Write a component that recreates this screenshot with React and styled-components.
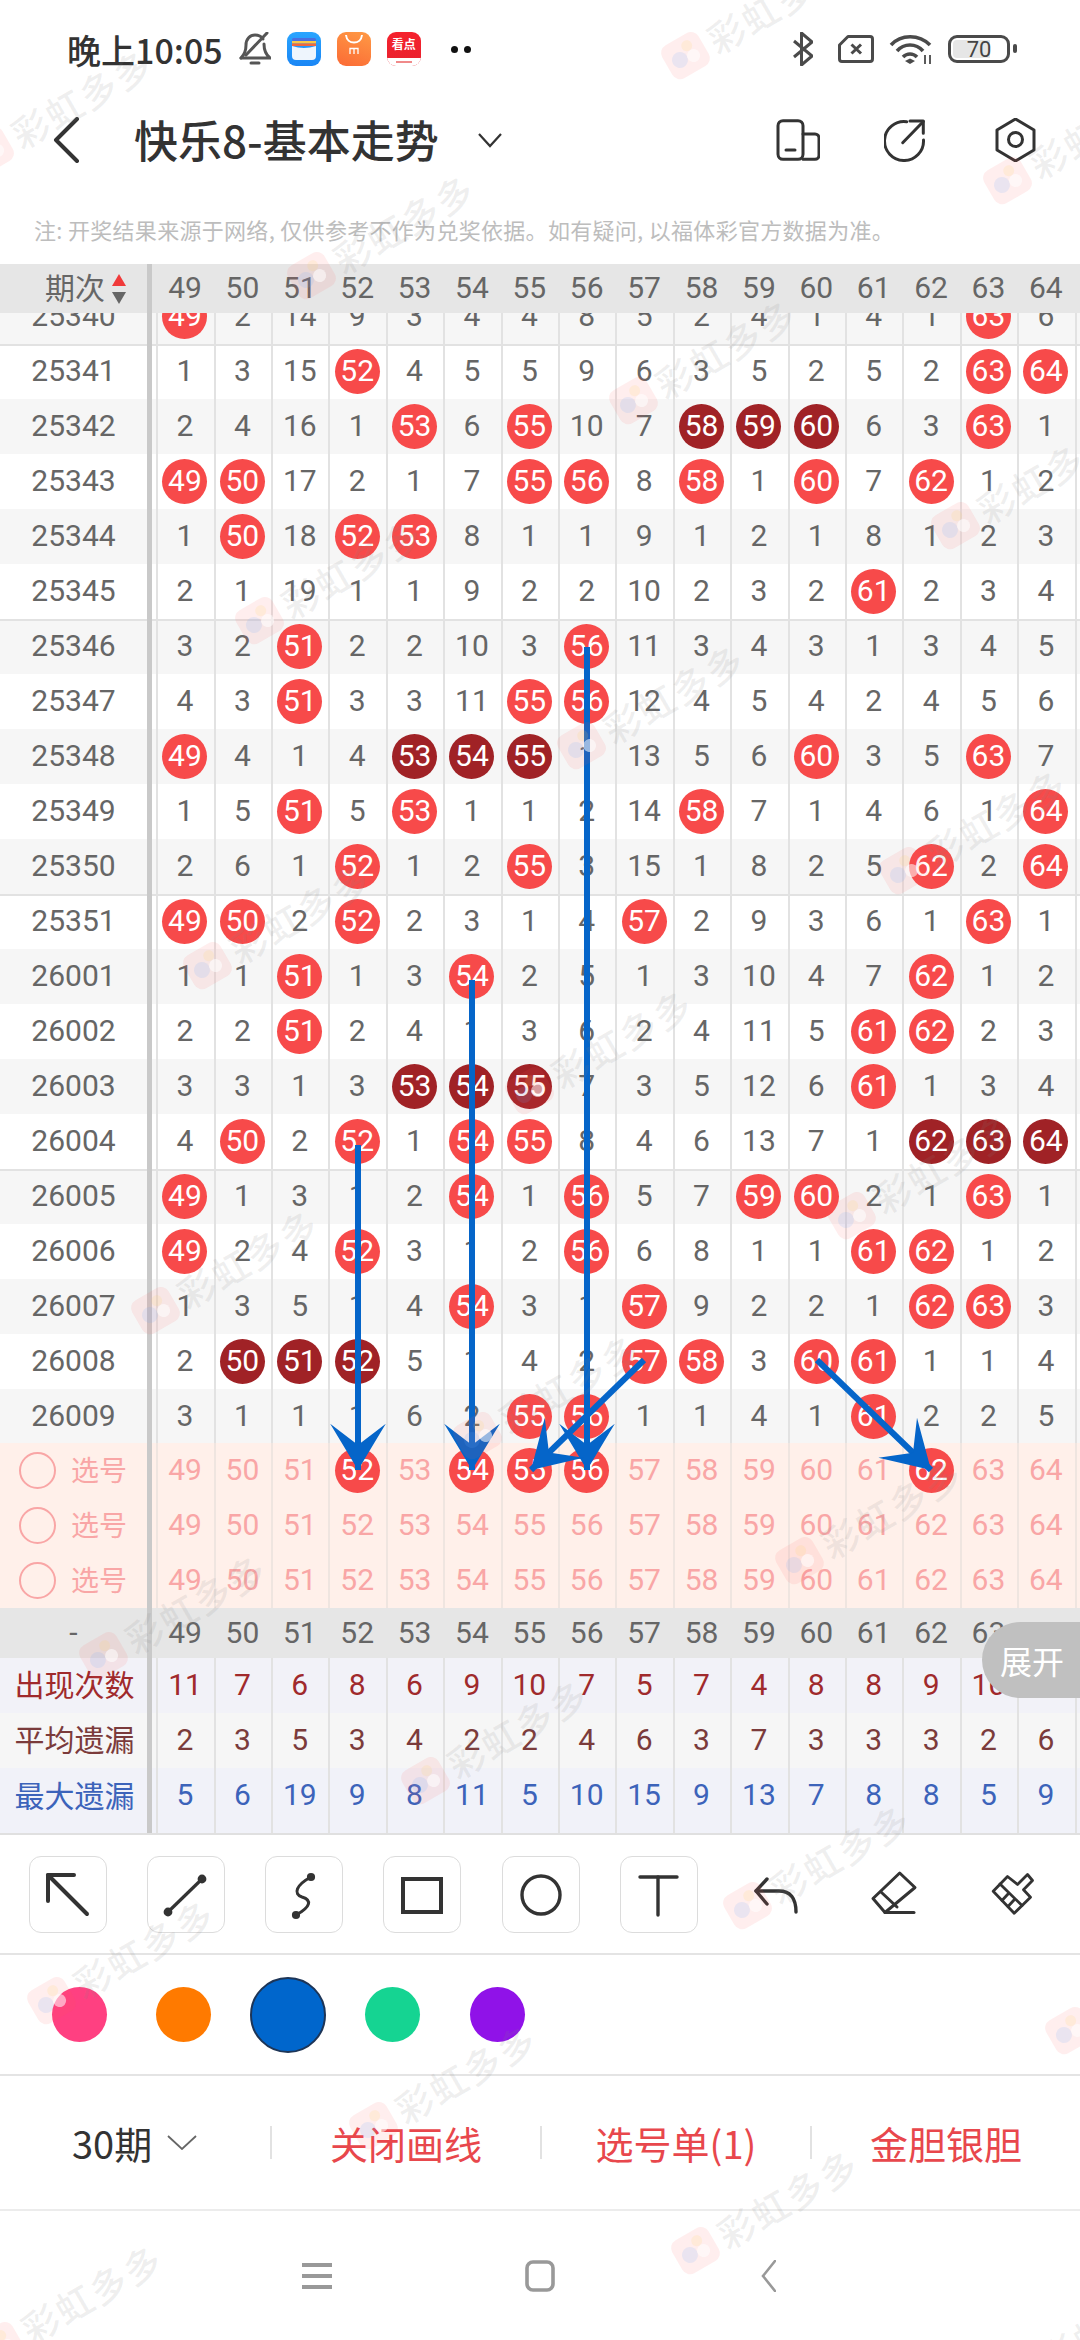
import styled, { createGlobalStyle } from "styled-components";

const GlobalStyle = createGlobalStyle`
  html, body { margin: 0; padding: 0; background: #fff; }
  * { box-sizing: border-box; }
`;

const CJK = `"Noto Sans CJK SC", "Noto Sans", sans-serif`;
const NUM = `Roboto, "Noto Sans CJK SC", sans-serif`;

const COLS = [49, 50, 51, 52, 53, 54, 55, 56, 57, 58, 59, 60, 61, 62, 63, 64];

const ROWS = [
  ["25340", 49, 2, 14, 9, 3, 4, 4, 8, 5, 2, 4, 1, 4, 1, 63, 6],
  ["25341", 1, 3, 15, 52, 4, 5, 5, 9, 6, 3, 5, 2, 5, 2, 63, 64],
  ["25342", 2, 4, 16, 1, 53, 6, 55, 10, 7, 58, 59, 60, 6, 3, 63, 1],
  ["25343", 49, 50, 17, 2, 1, 7, 55, 56, 8, 58, 1, 60, 7, 62, 1, 2],
  ["25344", 1, 50, 18, 52, 53, 8, 1, 1, 9, 1, 2, 1, 8, 1, 2, 3],
  ["25345", 2, 1, 19, 1, 1, 9, 2, 2, 10, 2, 3, 2, 61, 2, 3, 4],
  ["25346", 3, 2, 51, 2, 2, 10, 3, 56, 11, 3, 4, 3, 1, 3, 4, 5],
  ["25347", 4, 3, 51, 3, 3, 11, 55, 56, 12, 4, 5, 4, 2, 4, 5, 6],
  ["25348", 49, 4, 1, 4, 53, 54, 55, 1, 13, 5, 6, 60, 3, 5, 63, 7],
  ["25349", 1, 5, 51, 5, 53, 1, 1, 2, 14, 58, 7, 1, 4, 6, 1, 64],
  ["25350", 2, 6, 1, 52, 1, 2, 55, 3, 15, 1, 8, 2, 5, 62, 2, 64],
  ["25351", 49, 50, 2, 52, 2, 3, 1, 4, 57, 2, 9, 3, 6, 1, 63, 1],
  ["26001", 1, 1, 51, 1, 3, 54, 2, 5, 1, 3, 10, 4, 7, 62, 1, 2],
  ["26002", 2, 2, 51, 2, 4, 1, 3, 6, 2, 4, 11, 5, 61, 62, 2, 3],
  ["26003", 3, 3, 1, 3, 53, 54, 55, 7, 3, 5, 12, 6, 61, 1, 3, 4],
  ["26004", 4, 50, 2, 52, 1, 54, 55, 8, 4, 6, 13, 7, 1, 62, 63, 64],
  ["26005", 49, 1, 3, 1, 2, 54, 1, 56, 5, 7, 59, 60, 2, 1, 63, 1],
  ["26006", 49, 2, 4, 52, 3, 1, 2, 56, 6, 8, 1, 1, 61, 62, 1, 2],
  ["26007", 1, 3, 5, 1, 4, 54, 3, 1, 57, 9, 2, 2, 1, 62, 63, 3],
  ["26008", 2, 50, 51, 52, 5, 1, 4, 2, 57, 58, 3, 60, 61, 1, 1, 4],
  ["26009", 3, 1, 1, 1, 6, 2, 55, 56, 1, 1, 4, 1, 61, 2, 2, 5],
];

const PICKED = [[52, 54, 55, 56, 62], [], []];

const STATS = [
  { label: "出现次数", color: "#a02a2c", bg: "#f2f2f8", values: [11, 7, 6, 8, 6, 9, 10, 7, 5, 7, 4, 8, 8, 9, 10, 7] },
  { label: "平均遗漏", color: "#7b3b3b", bg: "#f6f6f6", values: [2, 3, 5, 3, 4, 2, 2, 4, 6, 3, 7, 3, 3, 3, 2, 6] },
  { label: "最大遗漏", color: "#3c63ba", bg: "#f1f2f9", tall: true, values: [5, 6, 19, 9, 8, 11, 5, 10, 15, 9, 13, 7, 8, 8, 5, 9] },
];

const ARROWS = [
  [358, 1145, 358, 1470],
  [472, 980, 472, 1470],
  [587, 647, 587, 1470],
  [644, 1360, 531, 1470],
  [817, 1360, 931, 1470],
];

const SWATCHES = [
  { color: "#ff4081" },
  { color: "#ff7a00" },
  { color: "#0066cc", active: true },
  { color: "#15d492" },
  { color: "#9012e8" },
];

const Page = styled.div`
  position: relative;
  width: 1080px;
  height: 2340px;
  overflow: hidden;
  background: #fff;
  font-family: ${CJK};
`;

/* status bar */
const StatusBar = styled.div`
  display: flex;
  align-items: center;
  height: 98px;
  padding: 0 64px 0 67px;
  color: #333;
`;

const Clock = styled.span`
  font-size: 34px;
  font-weight: 500;
  margin-right: 16px;
  white-space: nowrap;
`;

const StatusApps = styled.div`
  display: flex;
  align-items: center;
  gap: 16px;
`;

const AppTile = styled.div`
  position: relative;
  width: 34px;
  height: 34px;
  border-radius: 9px;
  overflow: hidden;
  background: ${(p) => p.$bg};
`;

const RedTileText = styled.span`
  display: block;
  margin-top: 2px;
  color: #fff;
  font-size: 12px;
  line-height: 20px;
  font-weight: 700;
  text-align: center;
  white-space: nowrap;
`;

const RedTileFoot = styled.div`
  position: absolute;
  left: 0;
  right: 0;
  bottom: 0;
  height: 8px;
  background: #fff;

  &::after {
    content: "";
    display: block;
    width: 16px;
    height: 2px;
    margin: 3px auto 0;
    background: #f08a8a;
  }
`;

const Dots = styled.div`
  display: flex;
  gap: 6px;
  margin-left: 14px;
`;

const Dot = styled.i`
  width: 7px;
  height: 7px;
  border-radius: 50%;
  background: #111;
`;

const StatusRight = styled.div`
  display: flex;
  align-items: center;
  gap: 15px;
  margin-left: auto;
`;

const BluetoothIcon = styled.svg`
  margin-right: 10px;
`;

const Battery = styled.div`
  position: relative;
  display: flex;
  align-items: center;
  justify-content: center;
  width: 62px;
  height: 28px;
  margin-right: 6px;
  border: 3.5px solid #4a4a4a;
  border-radius: 9px;
  font-family: ${NUM};
  font-size: 22px;
  color: #444;
  background: linear-gradient(90deg, #e6e6e6 72%, #fff 72%) content-box;
  padding: 2px;

  &::after {
    content: "";
    position: absolute;
    right: -10px;
    top: 6px;
    width: 4px;
    height: 9px;
    border-radius: 2px;
    background: #4a4a4a;
  }
`;

/* title bar */
const NavBar = styled.div`
  display: flex;
  align-items: center;
  height: 84px;
  padding: 0 44px 0 52px;
  color: #333;
`;

const Title = styled.h1`
  margin: 0 0 3px 52px;
  font-size: 44px;
  line-height: 60px;
  font-weight: 500;
  color: #333;
  white-space: nowrap;
`;

const TitleCaret = styled.span`
  display: flex;
  margin-left: 38px;
`;

const NavIcons = styled.div`
  display: grid;
  grid-template-columns: repeat(3, 44px);
  column-gap: 64px;
  margin-left: auto;
`;

const Note = styled.div`
  height: 82px;
  padding: 29px 0 0 34px;
  font-size: 22px;
  line-height: 36px;
  letter-spacing: 0.3px;
  color: #bdbdbd;
  white-space: nowrap;
`;

/* table */
const Band = styled.div`
  display: flex;
  height: ${(p) => p.$h}px;
  background: #e6e6e6;
  color: #666;
  font-family: ${NUM};
  font-size: 30px;
`;

const Row = styled.div`
  display: flex;
  height: ${(p) => p.$h || 55}px;
  background: ${(p) => p.$bg};
  color: ${(p) => p.$color || "#666"};
  font-family: ${NUM};
  font-size: 30px;
  box-shadow: ${(p) => (p.$group ? "inset 0 2px 0 #e2e2e2" : "none")};
`;

const Label = styled.div`
  display: flex;
  flex: 0 0 152px;
  align-items: center;
  justify-content: center;
  padding-bottom: ${(p) => p.$pb || 2}px;
  padding-left: ${(p) => (p.$cjk ? 2 : 0)}px;
  border-right: 5px solid #c9c9c9;
  white-space: nowrap;
  font-family: ${(p) => (p.$cjk ? CJK : NUM)};
`;

const HeadLabel = styled(Label)`
  gap: 7px;
  padding-left: 24px;
  padding-bottom: 5px;
  font-family: ${CJK};
`;

const SortMark = styled.span`
  display: flex;
  flex-direction: column;
  gap: 6px;
  margin-top: 5px;
`;

const Tri = styled.i`
  width: 0;
  height: 0;
  border-left: 7px solid transparent;
  border-right: 7px solid transparent;
  border-bottom: ${(p) => (p.$up ? "12px solid #f03a3a" : "0")};
  border-top: ${(p) => (p.$up ? "0" : "12px solid #666")};
`;

const Cells = styled.div`
  position: relative;
  display: flex;
  flex: 1;
  padding-left: 4.3px;

  &::after {
    content: "";
    position: absolute;
    left: 922.7px;
    top: 0;
    bottom: 0;
    width: 2px;
    background: ${(p) => p.$line || "transparent"};
  }
`;

const Cell = styled.div`
  display: flex;
  flex: 0 0 57.4px;
  align-items: center;
  justify-content: center;
  padding-bottom: ${(p) => p.$pb || 2}px;
  box-shadow: ${(p) => (p.$line ? `inset 2px 0 0 ${p.$line}` : "none")};
`;

const Ball = styled.span`
  display: flex;
  align-items: center;
  justify-content: center;
  width: 45px;
  height: 45px;
  margin-top: 2px;
  padding-bottom: 2px;
  border-radius: 50%;
  color: #fff;
  background: ${(p) => (p.$dark ? "#a02226" : "#f74a4a")};
`;

const Body = styled.div`
  height: 1130px;
  overflow: hidden;
`;

const BodyScroll = styled.div`
  margin-top: -24px;
`;

const PinkRow = styled(Row)`
  background: #fff0ea;
  color: #f9a6a6;
`;

const PickLabel = styled.div`
  display: flex;
  flex: 0 0 152px;
  align-items: center;
  gap: 15px;
  padding-left: 19px;
  border-right: 5px solid #c9c9c9;
  font-family: ${CJK};
  font-size: 28px;
`;

const PickText = styled.span`
  margin-bottom: 3px;
`;

const PickRing = styled.i`
  width: 37px;
  height: 37px;
  border: 2px solid #f9a6a6;
  border-radius: 50%;
`;

const ExpandTab = styled.div`
  position: absolute;
  left: 982px;
  top: 1622px;
  display: flex;
  align-items: center;
  width: 98px;
  height: 76px;
  padding-left: 18px;
  border-radius: 38px 0 0 38px;
  background: #c0c0c0;
  color: #fff;
  font-size: 32px;
`;

const TableEnd = styled.div`
  height: 2px;
  background: #e0e0e0;
`;

/* drawing tools */
const Tools = styled.div`
  display: flex;
  align-items: center;
  justify-content: space-between;
  height: 120px;
  padding: 0 28px 0 29px;
  border-bottom: 2px solid #e4e4e4;
`;

const Tool = styled.div`
  display: flex;
  flex: 0 0 76px;
  height: 77px;
  border-radius: 12px;
  border: 1.5px solid ${(p) => (p.$plain ? "transparent" : "#dcdcdc")};
`;

const Colors = styled.div`
  display: flex;
  align-items: center;
  height: 121px;
  padding-left: 27px;
  border-bottom: 2px solid #e4e4e4;
`;

const Slot = styled.div`
  display: flex;
  flex: 0 0 104.5px;
  justify-content: center;
`;

const Swatch = styled.i`
  width: ${(p) => (p.$active ? 76 : 55)}px;
  height: ${(p) => (p.$active ? 76 : 55)}px;
  border-radius: 50%;
  background: ${(p) => p.$color};
  border: ${(p) => (p.$active ? "2px solid #1d3557" : "0")};
`;

const Actions = styled.div`
  display: flex;
  align-items: center;
  height: 135px;
  border-bottom: 2px solid #ececec;
`;

const PeriodPick = styled.div`
  display: flex;
  flex: 0 0 270px;
  align-items: center;
  gap: 15px;
  padding-left: 72px;
  font-size: 38px;
  color: #333;
`;

const ActionBtn = styled.div`
  flex: 1;
  text-align: center;
  font-size: 38px;
  color: #e8474c;
  white-space: nowrap;
`;

const ActionRule = styled.i`
  flex: 0 0 2px;
  height: 33px;
  background: #e2e2e2;
`;

const SysNav = styled.div`
  display: grid;
  grid-template-columns: repeat(3, 223px);
  justify-content: center;
  justify-items: center;
  align-items: center;
  height: 129px;
`;

/* overlays */
const Overlay = styled.svg`
  position: absolute;
  left: 0;
  top: 0;
  pointer-events: none;
`;

const Mark = styled.div`
  position: absolute;
  display: flex;
  align-items: center;
  gap: 4px;
  transform: rotate(-30deg);
  transform-origin: 24px 24px;
  pointer-events: none;
`;

const MarkText = styled.span`
  font-size: 37px;
  font-weight: 500;
  letter-spacing: 2px;
  color: rgba(130, 130, 130, 0.13);
  white-space: nowrap;
`;

function ballDarkFlags(row) {
  // 连续三个及以上中奖号 -> 深色
  const hit = row.map((n, i) => n === COLS[i]);
  return hit.map((h, i) => {
    if (!h) return false;
    return (hit[i - 1] && hit[i - 2]) || (hit[i - 1] && hit[i + 1]) || (hit[i + 1] && hit[i + 2]);
  });
}

function arrowHead(x1, y1, x2, y2) {
  const len = Math.hypot(x2 - x1, y2 - y1);
  const ux = (x1 - x2) / len;
  const uy = (y1 - y2) / len;
  const wing = (deg) => {
    const r = (deg * Math.PI) / 180;
    return [x2 + 54 * (ux * Math.cos(r) - uy * Math.sin(r)), y2 + 54 * (ux * Math.sin(r) + uy * Math.cos(r))];
  };
  const a = wing(31);
  const b = wing(-31);
  return `${x2},${y2} ${a[0]},${a[1]} ${x2 + 25 * ux},${y2 + 25 * uy} ${b[0]},${b[1]}`;
}

function Watermarks() {
  const items = [];
  for (let j = -1; j <= 6; j++) {
    for (let i = -2; i <= 3; i++) {
      const x = 310 + i * 322 - j * 52;
      const y = 273 + i * 125 + j * 345;
      if (x > -60 && x < 1120 && y > -40 && y < 2380) items.push([x, y]);
    }
  }
  return items.map(([x, y]) => (
    <Mark key={`${x}-${y}`} style={{ left: x - 24, top: y - 24 }}>
      <svg width="48" height="48" viewBox="0 0 48 48">
        <rect x="3" y="5" width="42" height="38" rx="9" fill="#ff5a5a" opacity="0.1" />
        <circle cx="17" cy="25" r="8" fill="#6aa8ff" opacity="0.14" />
        <circle cx="30" cy="16" r="5.5" fill="#ffd75a" opacity="0.14" />
        <circle cx="31" cy="28" r="6.5" fill="#ffffff" opacity="0.55" />
      </svg>
      <MarkText>彩虹多多</MarkText>
    </Mark>
  ));
}

function Ic({ w = 76, h = 77, children, sw = 4 }) {
  return (
    <svg width={w} height={h} viewBox={`0 0 ${w} ${h}`} fill="none" stroke="#333" strokeWidth={sw} strokeLinecap="round" strokeLinejoin="round">
      {children}
    </svg>
  );
}

function StatusIcons() {
  return (
    <StatusRight>
      <BluetoothIcon width="20" height="34" viewBox="0 0 20 34" fill="none" stroke="#4a4a4a" strokeWidth="3" strokeLinejoin="round">
        <path d="M1 9 L19 24 L8.5 33 V1 L19 10 L1 25" />
      </BluetoothIcon>
      <svg width="36" height="28" viewBox="0 0 36 28" fill="none" stroke="#4a4a4a" strokeWidth="3" strokeLinejoin="round">
        <path d="M10 1.5 H32 a2.5 2.5 0 0 1 2.5 2.5 V24 a2.5 2.5 0 0 1 -2.5 2.5 H4 a2.5 2.5 0 0 1 -2.5 -2.5 V10 Z" />
        <path d="M13.5 9.5 L23 18.5 M23 9.5 L13.5 18.5" />
      </svg>
      <svg width="44" height="32" viewBox="0 0 44 32" fill="none" stroke="#4a4a4a" strokeWidth="3.6">
        <path d="M2 12 C12 1 30 1 41 12" />
        <path d="M8 18 C15 10 27 10 34 18" />
        <path d="M14 24 C18 20 24 20 28 24" />
        <path d="M16 28 L21 25.5 L26 28 L21 31 Z" fill="#4a4a4a" stroke="none" />
        <path d="M36 22 V31 M41 22 V31" strokeWidth="1.8" />
      </svg>
      <Battery>70</Battery>
    </StatusRight>
  );
}

export default function App() {
  return (
    <Page>
      <GlobalStyle />

      <StatusBar>
        <Clock>晚上10:05</Clock>
        <StatusApps>
          <svg width="32" height="34" viewBox="0 0 32 34" fill="none" stroke="#555" strokeWidth="3" strokeLinecap="round">
            <path d="M2 26 C6 22 7 18 7 13 C7 7 11 3 16 3 C19 3 22 4 24 7" />
            <path d="M25 12 C25 18 26 22 31 26 H2" />
            <path d="M28 1 L7 23" />
            <path d="M12 31 H20" />
          </svg>
          <AppTile $bg="linear-gradient(180deg,#2aa5ff,#1a86f5)">
            <svg width="34" height="34" viewBox="0 0 34 34">
              <rect x="5" y="6" width="24" height="3" rx="1.5" fill="#4b6ee0" />
              <rect x="5" y="9" width="24" height="2.5" fill="#f7c948" />
              <rect x="5" y="11.5" width="24" height="2.5" fill="#f2673d" />
              <path d="M5 14 Q17 18 29 14 V24 a4 4 0 0 1 -4 4 H9 a4 4 0 0 1 -4 -4 Z" fill="#eef5fd" />
            </svg>
          </AppTile>
          <AppTile $bg="linear-gradient(200deg,#ff9a45,#fb6a35)">
            <svg width="34" height="34" viewBox="0 0 34 34" fill="none" stroke="#fff" strokeWidth="2">
              <path d="M9 3 C10 13 24 13 25 3" />
              <path d="M13 22 V16.5 H21 V22 M17 16.5 V22" strokeWidth="1.3" />
            </svg>
          </AppTile>
          <AppTile $bg="linear-gradient(180deg,#f5222d,#e8212e)">
            <RedTileText>看点</RedTileText>
            <RedTileFoot />
          </AppTile>
          <Dots>
            <Dot />
            <Dot />
          </Dots>
        </StatusApps>
        <StatusIcons />
      </StatusBar>

      <NavBar>
        <svg width="30" height="46" viewBox="0 0 30 46" fill="none" stroke="#333" strokeWidth="4" strokeLinecap="round" strokeLinejoin="round">
          <path d="M25 2 L4 23 L25 44" />
        </svg>
        <Title>快乐8-基本走势</Title>
        <TitleCaret>
          <svg width="26" height="16" viewBox="0 0 26 16" fill="none" stroke="#333" strokeWidth="2.2">
            <path d="M2 2 L13 14 L24 2" />
          </svg>
        </TitleCaret>
        <NavIcons>
          <Ic w={44} h={44} sw={3}>
            <rect x="2" y="2.7" width="25" height="38.6" rx="5" />
            <path d="M27 16 H39 a4 4 0 0 1 4 4 V37.3 a4 4 0 0 1 -4 4 H27" />
            <path d="M10 32 H19" />
          </Ic>
          <Ic w={44} h={44} sw={3}>
            <path d="M22.7 3.7 A19.5 19.5 0 1 0 39.5 22" />
            <path d="M18.7 24.7 L39.3 3.5" />
            <path d="M26 3 H39.3 V15.3" />
          </Ic>
          <Ic w={44} h={44} sw={3}>
            <path d="M23.5 1 L42 12 V32 L23.5 43 L5 32 V12 Z" />
            <circle cx="23.5" cy="21.5" r="7" />
          </Ic>
        </NavIcons>
      </NavBar>

      <Note>注: 开奖结果来源于网络, 仅供参考不作为兑奖依据。如有疑问, 以福体彩官方数据为准。</Note>

      <Band $h={49}>
        <HeadLabel>
          期次
          <SortMark>
            <Tri $up />
            <Tri />
          </SortMark>
        </HeadLabel>
        <Cells>
          {COLS.map((c) => (
            <Cell key={c}>{c}</Cell>
          ))}
        </Cells>
      </Band>

      <Body>
        <BodyScroll>
          {ROWS.map(([issue, ...nums], r) => {
            const dark = ballDarkFlags(nums);
            return (
              <Row key={issue} $bg={r % 2 === 0 ? "#f6f6f6" : "#fff"} $group={r % 5 === 1 && r < 17 ? true : r === 16}>
                <Label>{issue}</Label>
                <Cells $line="#e2e2e2">
                  {nums.map((n, i) => (
                    <Cell key={i} $line="#e2e2e2">
                      {n === COLS[i] ? <Ball $dark={dark[i]}>{n}</Ball> : n}
                    </Cell>
                  ))}
                </Cells>
              </Row>
            );
          })}
        </BodyScroll>
      </Body>

      {PICKED.map((picked, r) => (
        <PinkRow key={r}>
          <PickLabel>
            <PickRing />
            <PickText>选号</PickText>
          </PickLabel>
          <Cells $line="#efe5e0">
            {COLS.map((c) => (
              <Cell key={c} $line="#efe5e0">
                {picked.includes(c) ? <Ball>{c}</Ball> : c}
              </Cell>
            ))}
          </Cells>
        </PinkRow>
      ))}

      <Band $h={50}>
        <Label>-</Label>
        <Cells>
          {COLS.map((c) => (
            <Cell key={c}>{c}</Cell>
          ))}
        </Cells>
      </Band>

      {STATS.map((s) => (
        <Row key={s.label} $bg={s.bg} $color={s.color} $h={s.tall ? 65 : 55}>
          <Label $cjk $pb={s.tall ? 14 : 5}>
            {s.label}
          </Label>
          <Cells $line="#e2e2e2">
            {s.values.map((v, i) => (
              <Cell key={i} $line="#e2e2e2" $pb={s.tall ? 12 : 2}>
                {v}
              </Cell>
            ))}
          </Cells>
        </Row>
      ))}
      <TableEnd />

      <Tools>
        <Tool>
          <Ic>
            <path d="M57 57 L18 18" />
            <path d="M44 18 H18 V44" />
          </Ic>
        </Tool>
        <Tool>
          <Ic sw={3.2}>
            <path d="M20 55 L54 22" />
            <circle cx="20" cy="55" r="2.8" fill="#333" />
            <circle cx="54" cy="22" r="2.8" fill="#333" />
          </Ic>
        </Tool>
        <Tool>
          <Ic sw={3}>
            <path d="M45 20 C30 28 27 37 36 40 C46 43 45 50 30 58" />
            <circle cx="45" cy="20" r="2.6" fill="#333" />
            <circle cx="30" cy="58" r="2.6" fill="#333" />
          </Ic>
        </Tool>
        <Tool>
          <Ic sw={4}>
            <rect x="19" y="22" width="38" height="33" strokeLinejoin="miter" />
          </Ic>
        </Tool>
        <Tool>
          <Ic sw={3.4}>
            <circle cx="38" cy="38" r="19" />
          </Ic>
        </Tool>
        <Tool>
          <Ic sw={3.4}>
            <path d="M19 20 H56" />
            <path d="M37 20 V58" />
          </Ic>
        </Tool>
        <Tool $plain>
          <Ic sw={3.4}>
            <path d="M28 22 L17 34 L28 47" />
            <path d="M17 34 H40 Q57 34 57 55" />
          </Ic>
        </Tool>
        <Tool $plain>
          <Ic sw={3}>
            <path d="M42.7 16 L58 30.5 L28 55.5 L16 41.5 Z" />
            <path d="M24 35 L40 50" />
            <path d="M28 55.5 H57" />
          </Ic>
        </Tool>
        <Tool $plain>
          <Ic sw={2.8}>
            <path d="M32.5 19.5 L42.5 27.5 L52.5 17.5 L57.5 23.5 L48.5 32.8 L55.5 40.2 L39.2 56.2 L18.2 34.2 Z" />
            <path d="M25 27 L47 48.5" />
            <path d="M27 43.5 L33 37 M33 49.5 L39 43" />
          </Ic>
        </Tool>
      </Tools>

      <Colors>
        {SWATCHES.map((s) => (
          <Slot key={s.color}>
            <Swatch $color={s.color} $active={s.active} />
          </Slot>
        ))}
      </Colors>

      <Actions>
        <PeriodPick>
          30期
          <svg width="30" height="15" viewBox="0 0 30 15" fill="none" stroke="#666" strokeWidth="1.8">
            <path d="M1 1 L15 14 L29 1" />
          </svg>
        </PeriodPick>
        <ActionRule />
        <ActionBtn>关闭画线</ActionBtn>
        <ActionRule />
        <ActionBtn>选号单(1)</ActionBtn>
        <ActionRule />
        <ActionBtn>金胆银胆</ActionBtn>
      </Actions>

      <SysNav>
        <svg width="30" height="30" viewBox="0 0 30 30" fill="none" stroke="#999" strokeWidth="4">
          <path d="M0 4 H30 M0 15 H30 M0 26 H30" />
        </svg>
        <svg width="30" height="32" viewBox="0 0 30 32" fill="none" stroke="#999" strokeWidth="3.6">
          <rect x="2" y="2" width="26" height="28" rx="6" />
        </svg>
        <svg width="26" height="32" viewBox="0 0 26 32" fill="none" stroke="#999" strokeWidth="2.6" strokeLinecap="round">
          <path d="M25 1 L13 16 L25 31" />
        </svg>
      </SysNav>

      <Overlay width="1080" height="2340" viewBox="0 0 1080 2340">
        {ARROWS.map(([x1, y1, x2, y2]) => (
          <g key={`${x1}-${y1}`}>
            <line x1={x1} y1={y1} x2={x2} y2={y2} stroke="#0565c9" strokeWidth="6" />
            <polygon points={arrowHead(x1, y1, x2, y2)} fill="#0565c9" />
          </g>
        ))}
      </Overlay>

      <ExpandTab>展开</ExpandTab>

      <Watermarks />
    </Page>
  );
}
